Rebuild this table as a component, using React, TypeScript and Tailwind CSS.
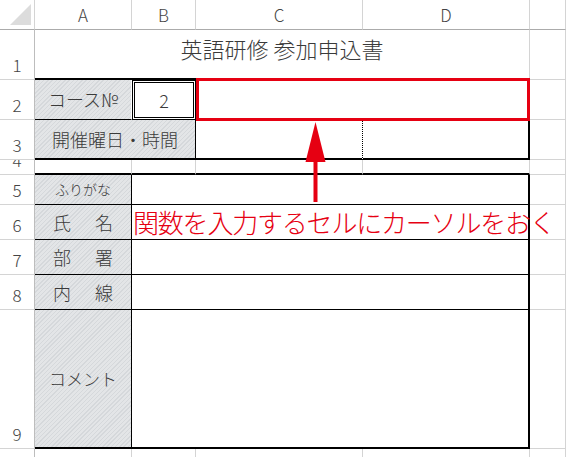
import React from "react";

const grid = "border-[#d4d4d4]";
const hatch =
  "bg-[image:repeating-linear-gradient(135deg,#d5d8db_0px,#d5d8db_1px,#e3e5e7_1px,#e3e5e7_3px)]";
const label = "text-[18px] text-[#3a3a3a] flex items-center justify-center";

const ColHead = ({ children }: { children?: React.ReactNode }) => (
  <div className="border-r border-b border-r-[#d4d4d4] border-b-[#ababab] flex items-center justify-center text-[17px] text-[#444]">
    {children}
  </div>
);

const RowHead = ({ n }: { n: number }) => (
  <div className="border-r border-b border-r-[#bdbdbd] border-b-[#d4d4d4] flex items-end justify-center pb-[4px] overflow-hidden text-[17px] leading-[20px] text-[#444]">
    {n}
  </div>
);

const Empty = ({ className = "" }: { className?: string }) => (
  <div className={`border-r border-b ${grid} ${className}`} />
);

const Spaced = ({ a, b }: { a: string; b: string }) => (
  <div className={`${hatch} border-r border-b border-black text-[18px] text-[#3a3a3a] flex items-center justify-between px-[18px]`}>
    <span>{a}</span>
    <span>{b}</span>
  </div>
);

export default function App() {
  return (
    <div className="relative h-[457px] w-[566px] overflow-hidden bg-white font-light font-['Noto_Sans_CJK_JP',sans-serif]">
      <div className="grid grid-cols-[35px_97px_64px_167px_167px_1fr] grid-rows-[30px_50px_40px_40px_15px_30px_35px_35px_35px_139px_30px]">
        {/* header */}
        <div className="border-r border-b border-r-[#d4d4d4] border-b-[#ababab] flex items-start justify-start">
          <svg width="34" height="29" viewBox="0 0 34 29">
            <polygon points="10,25 31,25 31,4" fill="#dcdcdc" />
          </svg>
        </div>
        <ColHead>A</ColHead>
        <ColHead>B</ColHead>
        <ColHead>C</ColHead>
        <ColHead>D</ColHead>
        <ColHead />

        {/* row 1 */}
        <RowHead n={1} />
        <div className="col-span-4 border-b-2 border-b-black border-r border-r-[#d4d4d4] flex items-center justify-center pb-[12px] text-[22px] text-[#3a3a3a]">
          英語研修 参加申込書
        </div>
        <Empty />

        {/* row 2 */}
        <RowHead n={2} />
        <div className={`${hatch} ${label} border-b border-b-black border-r border-r-white`}>コース№</div>
        <div className={`${label} border-[3px] border-double border-black`}>2</div>
        <div className="col-span-2 border-r-2 border-b border-black" />
        <Empty />

        {/* row 3 */}
        <RowHead n={3} />
        <div className={`${hatch} ${label} col-span-2 border-r border-b-2 border-black`}>開催曜日・時間</div>
        <div className="border-r border-b-2 border-black [border-right-style:dotted]" />
        <div className="border-r-2 border-b-2 border-black" />
        <Empty />

        {/* row 4 */}
        <RowHead n={4} />
        <div className="border-r border-r-[#d4d4d4] border-b-2 border-b-black" />
        <div className="border-r border-r-[#d4d4d4] border-b-2 border-b-black" />
        <div className="border-r border-r-[#d4d4d4] border-b-2 border-b-black" />
        <div className="border-r border-r-[#d4d4d4] border-b-2 border-b-black" />
        <Empty />

        {/* row 5 */}
        <RowHead n={5} />
        <div className={`${hatch} border-r border-b border-black text-[14px] text-[#3a3a3a] flex items-center justify-center`}>ふりがな</div>
        <div className="col-span-3 border-r-2 border-b border-black" />
        <Empty />

        {/* row 6 */}
        <RowHead n={6} />
        <Spaced a="氏" b="名" />
        <div className="col-span-3 border-r-2 border-b border-black flex items-center pl-[1px] overflow-visible">
          <span className="whitespace-nowrap text-[26px] leading-none tracking-[-1.2px] text-[#e60012]">
            関数を入力するセルにカーソルをおく
          </span>
        </div>
        <Empty />

        {/* row 7 */}
        <RowHead n={7} />
        <Spaced a="部" b="署" />
        <div className="col-span-3 border-r-2 border-b border-black" />
        <Empty />

        {/* row 8 */}
        <RowHead n={8} />
        <Spaced a="内" b="線" />
        <div className="col-span-3 border-r-2 border-b border-black" />
        <Empty />

        {/* row 9 */}
        <RowHead n={9} />
        <div className={`${hatch} border-r border-b-2 border-black text-[17px] text-[#3a3a3a] flex items-center justify-center`}>コメント</div>
        <div className="col-span-3 border-r-2 border-b-2 border-black" />
        <Empty />

        {/* row 10 */}
        <RowHead n={10} />
        <Empty />
        <Empty />
        <Empty />
        <Empty />
        <Empty />
      </div>

      {/* annotation: selected cell highlight */}
      <div className="absolute left-[196px] top-[78px] h-[43px] w-[334px] border-[3px] border-[#e60012]" />

      {/* annotation: arrow */}
      <svg className="absolute left-[300px] top-[118px]" width="32" height="90" viewBox="300 118 32 90">
        <polygon points="315.5,122 305.5,162 325.5,162" fill="#e60012" />
        <rect x="313.5" y="160" width="4" height="42" fill="#e60012" />
      </svg>
    </div>
  );
}
